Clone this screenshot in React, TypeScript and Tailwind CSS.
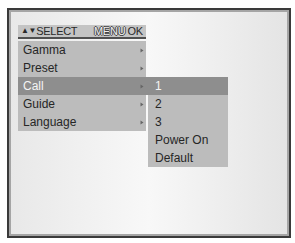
import React from "react";

const Arrow = () => (
  <svg width="4" height="5" viewBox="0 0 4 5" className="shrink-0">
    <path d="M0.5 0.5 L3.5 2.5 L0.5 4.5 Z" fill="#666666" />
  </svg>
);

const MainCell = ({ label, arrow = true, active = false }: { label: string; arrow?: boolean; active?: boolean }) => (
  <div
    className={`w-[128px] h-[18px] flex items-center justify-between pl-[5px] pr-[2px] ${
      active ? "bg-[#8e8e8e] text-[#f4f4f4]" : "bg-[#bcbcbc] text-[#262626]"
    }`}
  >
    <span>{label}</span>
    {arrow && <Arrow />}
  </div>
);

const SubCell = ({ label, active = false }: { label: string; active?: boolean }) => (
  <div
    className={`w-[80px] h-[18px] flex items-center pl-[7px] ${
      active ? "bg-[#8e8e8e] text-[#f4f4f4]" : "bg-[#bcbcbc] text-[#262626]"
    }`}
  >
    {label}
  </div>
);

export default function App() {
  return (
    <div className="w-[295px] h-[243px] bg-white pt-[8px] pl-[7px]" style={{ fontFamily: '"Liberation Sans", Arial, sans-serif' }}>
      <div className="w-[284px] h-[230px] border-2 border-[#3a3a3a] shadow-[inset_0_0_0_2px_#a5a5a5] bg-gradient-to-r from-[#e8e8e8] via-[#f8f8f8] to-[#e4e4e4] pl-[9px] pt-[15px]">
        <div className="flex flex-col text-[12px] leading-none">
          <div className="w-[128px] h-[14px] bg-[#c4c4c4] border-b-2 border-[#505050] flex items-center justify-between pl-[3px] pr-[3px] text-[11px]" style={{ fontFamily: '"Liberation Sans Narrow", "Liberation Sans", sans-serif' }}>
            <span className="text-[#2a2a2a] tracking-[-0.3px] flex items-center">
              <span className="text-[8px] leading-none">▲▼</span>
              <span>SELECT</span>
            </span>
            <span className="tracking-[-0.2px] flex items-center">
              <span className="text-[#f0f0f0] [text-shadow:1px_0_0_#444,-1px_0_0_#444,0_1px_0_#444,0_-1px_0_#444]">MENU</span>
              <span className="text-[#2a2a2a] ml-[2px]">OK</span>
            </span>
          </div>
          <div className="h-[2px]" />
          <MainCell label="Gamma" />
          <MainCell label="Preset" />
          <div className="flex">
            <MainCell label="Call" active />
            <div className="w-[2px] bg-[#8e8e8e]" />
            <SubCell label="1" active />
          </div>
          <div className="flex">
            <MainCell label="Guide" />
            <div className="w-[2px]" />
            <SubCell label="2" />
          </div>
          <div className="flex">
            <MainCell label="Language" />
            <div className="w-[2px]" />
            <SubCell label="3" />
          </div>
          <div className="flex pl-[130px]">
            <SubCell label="Power On" />
          </div>
          <div className="flex pl-[130px]">
            <SubCell label="Default" />
          </div>
        </div>
      </div>
    </div>
  );
}
